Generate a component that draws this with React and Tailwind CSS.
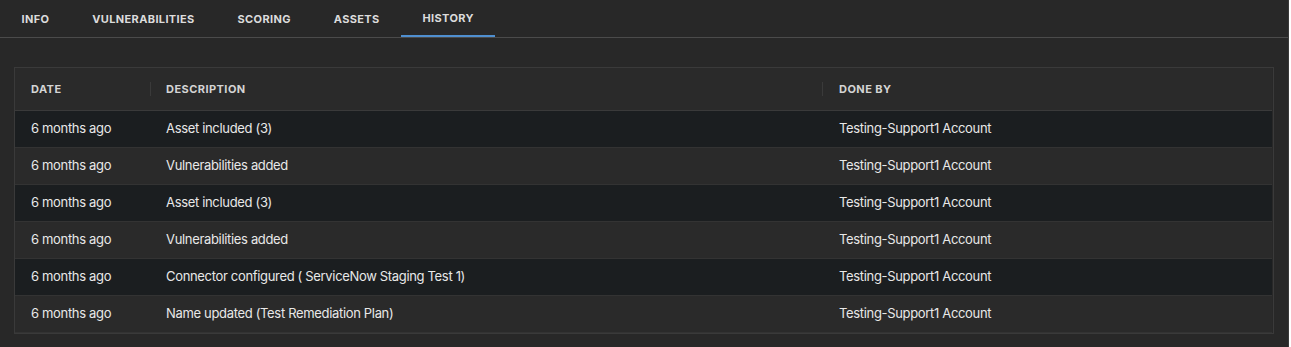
import React from 'react';

const tabs = ['INFO', 'VULNERABILITIES', 'SCORING', 'ASSETS', 'HISTORY'];

const rows = [
  { date: '6 months ago', description: 'Asset included (3)', doneBy: 'Testing-Support1 Account' },
  { date: '6 months ago', description: 'Vulnerabilities added', doneBy: 'Testing-Support1 Account' },
  { date: '6 months ago', description: 'Asset included (3)', doneBy: 'Testing-Support1 Account' },
  { date: '6 months ago', description: 'Vulnerabilities added', doneBy: 'Testing-Support1 Account' },
  { date: '6 months ago', description: 'Connector configured ( ServiceNow Staging Test 1)', doneBy: 'Testing-Support1 Account' },
  { date: '6 months ago', description: 'Name updated (Test Remediation Plan)', doneBy: 'Testing-Support1 Account' },
];

const App = () => {
  const activeTab = 'HISTORY';

  return (
    <div className="min-h-[347px] w-[1289px] bg-[#282828] border-r border-[#3a3a3a] font-['Inter',sans-serif] text-[#e8e8e8]">
      {/* Tabs */}
      <div className="flex h-[38px] border-b border-[#4b4b4b]">
        {tabs.map((tab) => (
          <div
            key={tab}
            className={`flex items-center px-[21.5px] pt-[2px] text-[11px] font-bold tracking-[0.35px] text-[#dcdcdc] ${
              tab === activeTab ? 'border-b-2 border-[#4f8fd0]' : ''
            }`}
          >
            {tab}
          </div>
        ))}
      </div>

      {/* History table */}
      <div className="mx-[14px] mt-[29px] border border-[#3a3a3a] pr-px">
        <div className="grid grid-cols-[135px_672px_1fr] h-[43px] items-center border-b border-[#3a3a3a] bg-[#2a2a2a] text-[11px] font-bold tracking-[0.45px] text-[#d4d4d4]">
          <div className="pl-4">DATE</div>
          <div className="flex items-center">
            <span className="h-[14px] w-px bg-[#3a3a3a]" />
            <span className="pl-[15px]">DESCRIPTION</span>
          </div>
          <div className="flex items-center">
            <span className="h-[14px] w-px bg-[#3a3a3a]" />
            <span className="pl-4">DONE BY</span>
          </div>
        </div>
        {rows.map((row, i) => (
          <div
            key={i}
            className={`grid grid-cols-[135px_672px_1fr] h-[37px] items-center border-b border-[#333333] text-[13px] tracking-[-0.33px] ${
              i % 2 === 0 ? 'bg-[#1b1e20]' : 'bg-[#2a2a2a]'
            }`}
          >
            <div className="pl-4">{row.date}</div>
            <div className="pl-4">{row.description}</div>
            <div className="pl-[17px]">{row.doneBy}</div>
          </div>
        ))}
      </div>
    </div>
  );
};

export default App;
